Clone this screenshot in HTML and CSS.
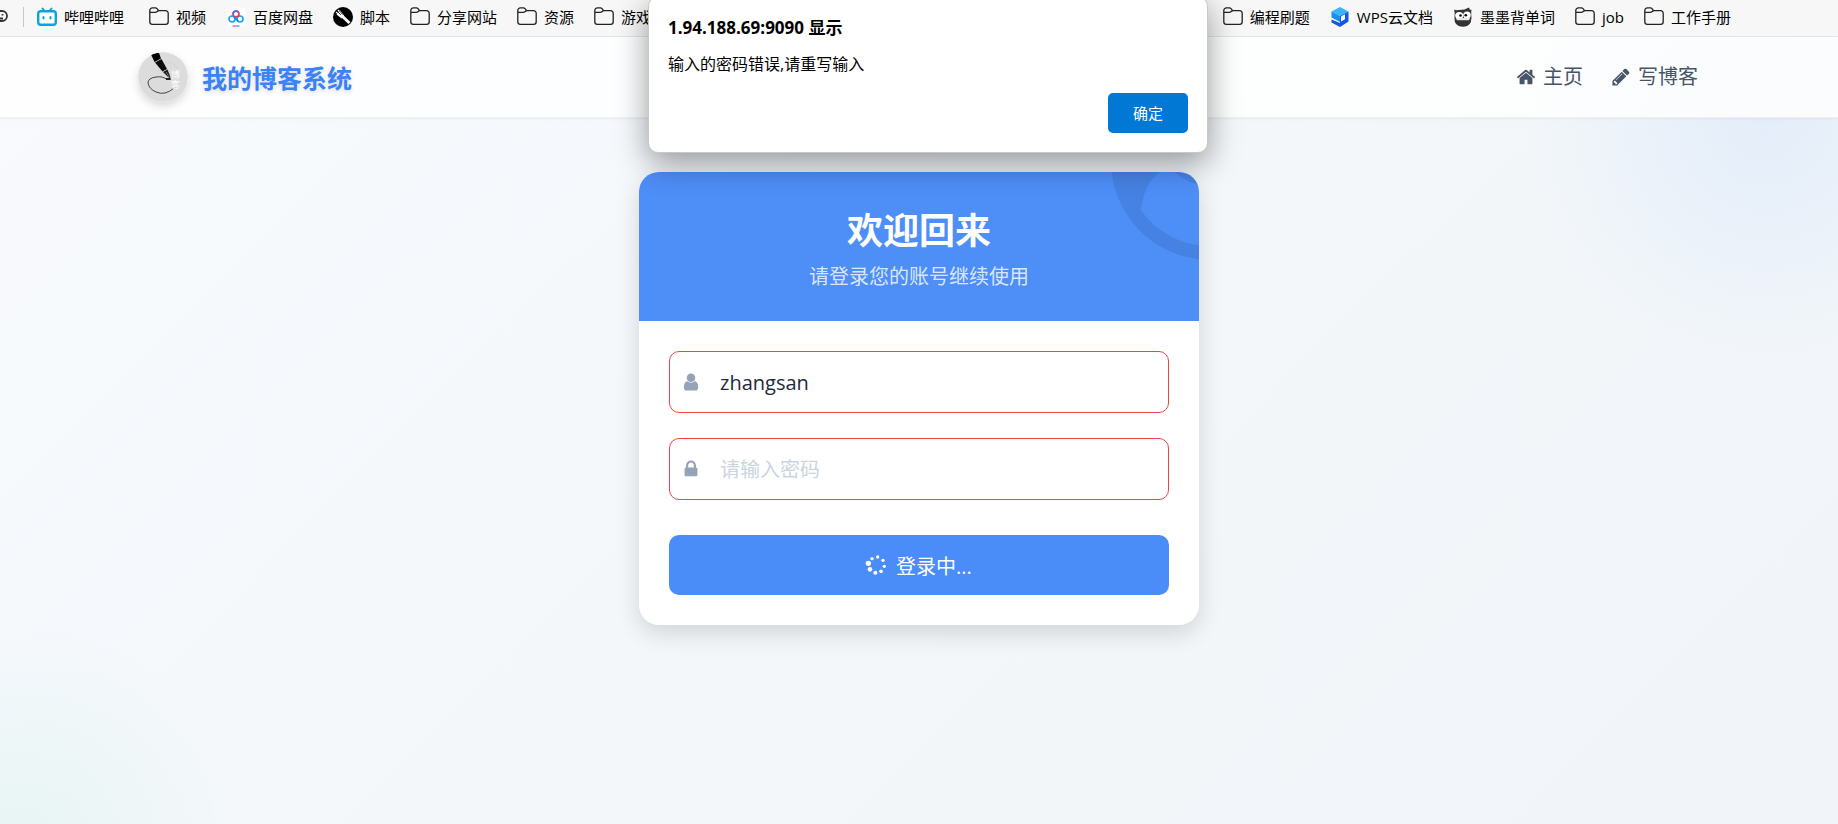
FILE: index.html
```html
<!DOCTYPE html>
<html lang="zh-CN">
<head>
    <meta charset="UTF-8">
    <meta name="viewport" content="width=device-width, initial-scale=1.0">
    <title>博客登录页</title>
    <link rel="stylesheet" href="styles.css">
</head>
<body>
    <!-- 图标 -->
    <svg class="sprite" aria-hidden="true">
        <symbol id="icon-folder" viewBox="0 0 20 20">
            <path d="M.8 4.2v10.6a2.6 2.6 0 0 0 2.6 2.6h13.2a2.6 2.6 0 0 0 2.6-2.6V6.2a2.6 2.6 0 0 0-2.6-2.6H9.6L8 1.6Q7.400 .9 6.500 .9H3.400A2.600 2.600 0 0 0 .8 3.500zM.8 5.300H6.200Q7.200 5.300 7.900 4.800L9.600 3.600" fill="none" stroke="#222" stroke-width="1.300"/>
        </symbol>
        <symbol id="icon-home" viewBox="0 0 1792 1792">
            <path fill="currentColor" d="M1472 992v480q0 26-19 45t-45 19h-384v-384h-256v384h-384q-26 0-45-19t-19-45v-480q0-1 .5-3t.5-3l575-474 575 474q1 2 1 6zm223-69l-62 74q-8 9-21 11h-3q-13 0-21-7l-692-577-692 577q-12 8-24 7-13-2-21-11l-62-74q-8-10-7-23.5t11-21.5l719-599q32-26 76-26t76 26l244 204v-195q0-14 9-23t23-9h192q14 0 23 9t9 23v408l219 182q10 8 11 21.5t-7 23.5z"/>
        </symbol>
        <symbol id="icon-pencil" viewBox="0 0 1792 1792">
            <path fill="currentColor" d="M491 1536l91-91-235-235-91 91v107h128v128h107zm523-928q0-22-22-22-10 0-17 7l-542 542q-7 7-7 17 0 22 22 22 10 0 17-7l542-542q7-7 7-17zm-54-192l416 416-832 832h-416v-416zm683 96q0 53-37 90l-166 166-416-416 166-165q36-38 90-38 53 0 91 38l235 234q37 39 37 91z"/>
        </symbol>
        <symbol id="icon-user" viewBox="0 0 1792 1792">
            <path fill="currentColor" d="M1536 1399q0 109-62.5 187t-150.5 78h-854q-88 0-150.5-78t-62.5-187q0-85 8.5-160.5t31.5-152 58.5-131 94-89 134.5-34.5q131 128 313 128t313-128q76 0 134.5 34.5t94 89 58.5 131 31.5 152 8.5 160.500zm-256-887q0 159-112.5 271.5t-271.5 112.5-271.5-112.5-112.5-271.5 112.5-271.5 271.5-112.5 271.5 112.5 112.5 271.5z"/>
        </symbol>
        <symbol id="icon-lock" viewBox="0 0 1792 1792">
            <path fill="currentColor" d="M640 768h512v-192q0-106-75-181t-181-75-181 75-75 181v192zm832 96v576q0 40-28 68t-68 28h-960q-40 0-68-28t-28-68v-576q0-40 28-68t68-28h32v-192q0-184 132-316t316-132 316 132 132 316v192h32q40 0 68 28t28 68z"/>
        </symbol>
    </svg>

    <!-- 书签栏 -->
    <nav class="bookmarks" aria-label="书签">
        <svg class="bookmark-cut" viewBox="0 0 8 20"><path d="M-4 4H2a4.500 4.500 0 0 1 0 10H-4M-3 11.500H3M2.500 7v1.500" fill="none" stroke="#333" stroke-width="1.800"/></svg>
        <span class="separator"></span>
        <div class="bookmark-group">
            <a href="#" class="bookmark bookmark-first">
                <svg viewBox="0 0 20 20"><path d="M5.500 1.500L7.500 4M14.500 1.500L12.500 4" stroke="#0ba3dc" stroke-width="2" stroke-linecap="round"/><rect x="1.200" y="4.200" width="17.600" height="13.600" rx="2.500" fill="#fff" stroke="#0ba3dc" stroke-width="2.400"/><path d="M6.500 10v1.500M13.500 10v1.500" stroke="#0ba3dc" stroke-width="2" stroke-linecap="round"/></svg>
                哔哩哔哩
            </a>
            <a href="#" class="bookmark"><svg><use href="#icon-folder"/></svg>视频</a>
            <a href="#" class="bookmark">
                <svg viewBox="0 0 20 20"><rect x=".5" y=".5" width="19" height="19" rx="3" fill="#fff"/><g fill="none" stroke-width="1.700"><circle cx="6" cy="12" r="3" stroke="#18a8f5"/><circle cx="14" cy="12" r="3" stroke="#18a8f5"/><circle cx="10" cy="7" r="3" stroke="#e8385a"/><path d="M8 9.800L12 13.800M7 7a3 3 0 0 1 5-2" stroke="#1787f5"/></g><path d="M6.500 19H10" stroke="#f02f55"/><path d="M10 19h3.500" stroke="#1378ee"/></svg>
                百度网盘
            </a>
            <a href="#" class="bookmark">
                <svg viewBox="0 0 20 20"><circle cx="10" cy="10" r="10" fill="#000"/><path d="M8.500 8.500L16.500 16" stroke="#fff" stroke-width="3"/><path d="M7 3.500l4 5-2.500 3-5-4" fill="#fff"/><path d="M5 3l4 4.500M3 5l4.500 4" stroke="#fff" stroke-width="1.200"/><path d="M4.500 4.500L8 8M6.500 4L9.500 7.500" stroke="#000" stroke-width=".7"/></svg>
                脚本
            </a>
            <a href="#" class="bookmark"><svg><use href="#icon-folder"/></svg>分享网站</a>
            <a href="#" class="bookmark"><svg><use href="#icon-folder"/></svg>资源</a>
            <a href="#" class="bookmark"><svg><use href="#icon-folder"/></svg>游戏</a>
        </div>
        <div class="bookmark-group bookmark-right">
            <a href="#" class="bookmark"><svg><use href="#icon-folder"/></svg>编程刷题</a>
            <a href="#" class="bookmark">
                <svg viewBox="0 0 20 20"><path d="M10 0l8.500 4.500L10 9 1.500 4.500z" fill="#35b7fa"/><path d="M1.500 4.500L10 9v6l-8.500-4.500z" fill="#168cf5"/><path d="M10 9l8.500-4.500v10L10 20 1.500 15.500v-3L10 16z" fill="#1555e8"/><path d="M11 9.500l4-2.200v5L11 14.500z" fill="#fff"/></svg>
                WPS云文档
            </a>
            <a href="#" class="bookmark">
                <svg viewBox="0 0 20 20"><path d="M1 2.500Q3 3.500 6 3 12 3 16 .5L17 3l1.500-.5Q18 5 18.500 11 18 19.500 10 19.500 1 19.500 1.500 11 2 5 1 2.500z" fill="#333"/><ellipse cx="6.200" cy="8.500" rx="4" ry="3.600" fill="#fff"/><ellipse cx="14" cy="8" rx="3.800" ry="3.600" fill="#fff"/><path d="M3 11h14l-1 2.500H4z" fill="#e8e8e8"/><path d="M2 13.500h16q-1 6-8 6t-8-6z" fill="#333"/><circle cx="7.500" cy="8.500" r="1.300"/><circle cx="12.800" cy="8.200" r="1.300"/></svg>
                墨墨背单词
            </a>
            <a href="#" class="bookmark"><svg><use href="#icon-folder"/></svg>job</a>
            <a href="#" class="bookmark"><svg><use href="#icon-folder"/></svg>工作手册</a>
        </div>
    </nav>

    <!-- 导航栏 -->
    <header class="nav">
        <div class="nav-inner">
            <svg class="logo" viewBox="0 0 50 50">
                <circle cx="25" cy="25" r="25" fill="#dcdcdc"/>
                <path d="M27 11q8-3 13 6" fill="none" stroke="#d0d0d0" stroke-width=".6"/>
                <path d="M13 2.500Q17 .5 21 1l2 5.500-6.500 3.500z" fill="#000"/>
                <path d="M17 10.500l6.500-3.500 5.500 10-4.500 2.500z" fill="#0c0c0c"/>
                <path d="M25 20l4.500-2.500 2.500 6.500.5 2.500-2.500-1.500z" fill="#1a1a1a"/>
                <path d="M28 20l3 5" stroke="#dcdcdc" stroke-width=".5"/>
                <path d="M32.500 27.500H29Q25 24 18 25 10 26 10 31q1 6 8 9 9 4 18-4" fill="none" stroke="#333" stroke-width=".9"/>
                <path d="M28 27h4.500" stroke="#222" stroke-width="1.800"/>
                <text class="logo-text" x="33" y="26">博</text>
                <text class="logo-text" x="33" y="36">客</text>
            </svg>
            <span class="title">我的博客系统</span>
            <div class="nav-links">
                <a href="#"><svg><use href="#icon-home"/></svg>主页</a>
                <a href="#"><svg><use href="#icon-pencil"/></svg>写博客</a>
            </div>
        </div>
    </header>

    <!-- 登录框 -->
    <main class="container">
        <div class="login-card">
            <div class="login-header">
                <svg class="login-mark" viewBox="0 0 1792 1792" aria-hidden="true"><path fill="currentColor" d="M1523 1339q-22-155-87.500-257.500t-184.500-118.500q-67 74-159.500 115.500t-195.500 41.500-195.500-41.500-159.500-115.500q-119 16-184.500 118.500t-87.500 257.500q106 150 271 237.500t356 87.500 356-87.500 271-237.500zm-243-699q0-159-112.500-271.500t-271.500-112.500-271.500 112.500-112.500 271.500 112.500 271.500 271.500 112.500 271.500-112.500 112.500-271.500zm512 256q0 182-71 347.500t-190.500 286-285.500 191.500-349 71q-182 0-348-71t-286-191-191-286-71-348 71-348 191-286 286-191 348-71 348 71 286 191 191 286 71 348z"/></svg>
                <h1>欢迎回来</h1>
                <p>请登录您的账号继续使用</p>
            </div>
            <form class="login-body" onsubmit="return false">
                <label class="field">
                    <svg aria-hidden="true"><use href="#icon-user"/></svg>
                    <input type="text" id="username" value="zhangsan" placeholder="请输入用户名" aria-label="用户名">
                </label>
                <label class="field">
                    <svg aria-hidden="true"><use href="#icon-lock"/></svg>
                    <input type="password" id="password" placeholder="请输入密码" aria-label="密码">
                </label>
                <button type="submit" class="submit">
                    <svg viewBox="0 0 60 60" fill="#fff"><circle cx="7" cy="25" r="8"/><circle cx="12" cy="43" r="7"/><circle cx="28" cy="53" r="6"/><circle cx="45" cy="49" r="5.500"/><circle cx="55" cy="34" r="5"/><circle cx="51" cy="16" r="5"/><circle cx="35" cy="6" r="5"/><circle cx="18" cy="11" r="5"/></svg>
                    登录中...
                </button>
            </form>
        </div>
    </main>

    <!-- 提示框 -->
    <dialog class="alert" open aria-labelledby="alert-title">
        <h2 id="alert-title">1.94.188.69:9090 显示</h2>
        <p>输入的密码错误,请重写输入</p>
        <button type="button">确定</button>
    </dialog>
</body>
</html>
```

FILE: styles.css
```css
* {
    margin: 0;
    padding: 0;
    box-sizing: border-box;
}
body {
    min-height: 100vh;
    font-family: "Open Sans", "Noto Sans CJK SC", sans-serif;
    font-size: 20px;
    color: #1e293b;
    background:
        radial-gradient(circle at 96% 120px, rgba(59, 130, 246, 0.08), rgba(59, 130, 246, 0) 240px),
        radial-gradient(circle at 1% 102%, rgba(16, 185, 129, 0.06), rgba(16, 185, 129, 0) 220px),
        linear-gradient(135deg, #f8fafe 0%, #f3f7fa 50%, #f1f5f9 100%);
}
a {
    color: inherit;
    text-decoration: none;
}
button,
input {
    font: inherit;
}
.sprite {
    display: none;
}

/* 书签栏 */
.bookmarks {
    display: flex;
    align-items: center;
    height: 37px;
    padding-bottom: 3px;
    background-color: #f7f7f7;
    border-bottom: 1px solid #e6e6e6;
    font-size: 15px;
    line-height: 20px;
    color: #000;
    white-space: nowrap;
    overflow: hidden;
}
.bookmark-cut {
    width: 8px;
    height: 20px;
}
.separator {
    width: 1px;
    height: 20px;
    margin: 0 13px 0 15px;
    background-color: #c8c8c8;
}
.bookmark-group {
    display: flex;
    gap: 20px;
}
.bookmark-right {
    margin-left: auto;
    padding-right: 107px;
}
.bookmark {
    display: flex;
    align-items: center;
    gap: 7px;
}
.bookmark-first {
    margin-right: 5px;
}
.bookmark svg {
    width: 20px;
    height: 20px;
}

/* 导航栏 */
.nav {
    padding: 0 20px;
    background-color: rgba(255, 255, 255, 0.8);
    border-bottom: 1px solid rgba(0, 0, 0, 0.05);
    box-shadow: 0 1px 3px rgba(0, 0, 0, 0.05);
}
.nav-inner {
    display: flex;
    align-items: center;
    max-width: 1562px;
    height: 80px;
    margin: 0 auto;
}
.logo {
    width: 50px;
    height: 50px;
    margin-right: 14px;
    border-radius: 50%;
    box-shadow: 0 4px 8px rgba(0, 0, 0, 0.15);
}
.logo-text {
    font-size: 9px;
    fill: #fff;
}
.title {
    font-size: 25px;
    font-weight: 700;
    color: #3b82f6;
    text-shadow: 0 2px 4px rgba(0, 0, 0, 0.15);
}
.nav-links {
    display: flex;
    gap: 28px;
    margin-left: auto;
    padding-right: 2px;
    line-height: 26px;
    color: #475569;
}
.nav-links a {
    display: flex;
    align-items: center;
    gap: 7px;
}
.nav-links svg {
    width: 20px;
    height: 20px;
}

/* 登录框 */
.container {
    padding: 54px 20px 40px;
}
.login-card {
    max-width: 560px;
    margin: 0 auto;
    background-color: #fff;
    border-radius: 20px;
    box-shadow: 0 8px 24px rgba(0, 0, 0, 0.14);
    overflow: hidden;
}
.login-header {
    position: relative;
    padding: 33px 30px 30px;
    background-color: #4d8ef7;
    color: #fff;
    text-align: center;
    overflow: hidden;
}
.login-mark {
    position: absolute;
    top: -110px;
    right: -110px;
    width: 198px;
    height: 198px;
    color: rgba(0, 0, 0, 0.08);
}
.login-header h1 {
    font-size: 36px;
    line-height: 52px;
}
.login-header p {
    padding-top: 5px;
    line-height: 29px;
    color: rgba(255, 255, 255, 0.8);
}
.login-body {
    padding: 30px;
}
.field {
    display: flex;
    align-items: center;
    gap: 19px;
    height: 62px;
    margin-bottom: 25px;
    padding: 0 11px;
    border: 1px solid #ef4444;
    border-radius: 10px;
}
.field svg {
    flex: none;
    width: 20px;
    height: 20px;
    color: #94a3b8;
}
.field input {
    flex: 1;
    min-width: 0;
    height: 100%;
    border: none;
    outline: none;
    background: none;
    color: #1e293b;
}
.field input::placeholder {
    color: #cbd5e1;
}
.submit {
    display: flex;
    align-items: center;
    justify-content: center;
    gap: 10px;
    width: 100%;
    height: 60px;
    margin-top: 35px;
    border: none;
    border-radius: 10px;
    background-color: #4a8cf8;
    color: #fff;
    cursor: pointer;
}
.submit svg {
    width: 20px;
    height: 20px;
    overflow: visible;
}

/* 提示框 */
.alert {
    position: absolute;
    top: -4px;
    left: calc(50% + 9px);
    transform: translateX(-50%);
    display: flex;
    flex-direction: column;
    width: 560px;
    max-width: 100%;
    margin: 0;
    padding: 19px;
    border: 1px solid #c8c8c8;
    border-radius: 10px;
    background-color: #fff;
    box-shadow: 0 10px 32px rgba(0, 0, 0, 0.4);
    color: #000;
    font-size: 16px;
    line-height: 24px;
}
.alert h2 {
    font-size: 17px;
}
.alert p {
    margin-top: 12px;
}
.alert button {
    align-self: flex-end;
    width: 80px;
    height: 40px;
    margin-top: 17px;
    border: none;
    border-radius: 5px;
    background-color: #0078d4;
    color: #fff;
    font-size: 15px;
}
```
